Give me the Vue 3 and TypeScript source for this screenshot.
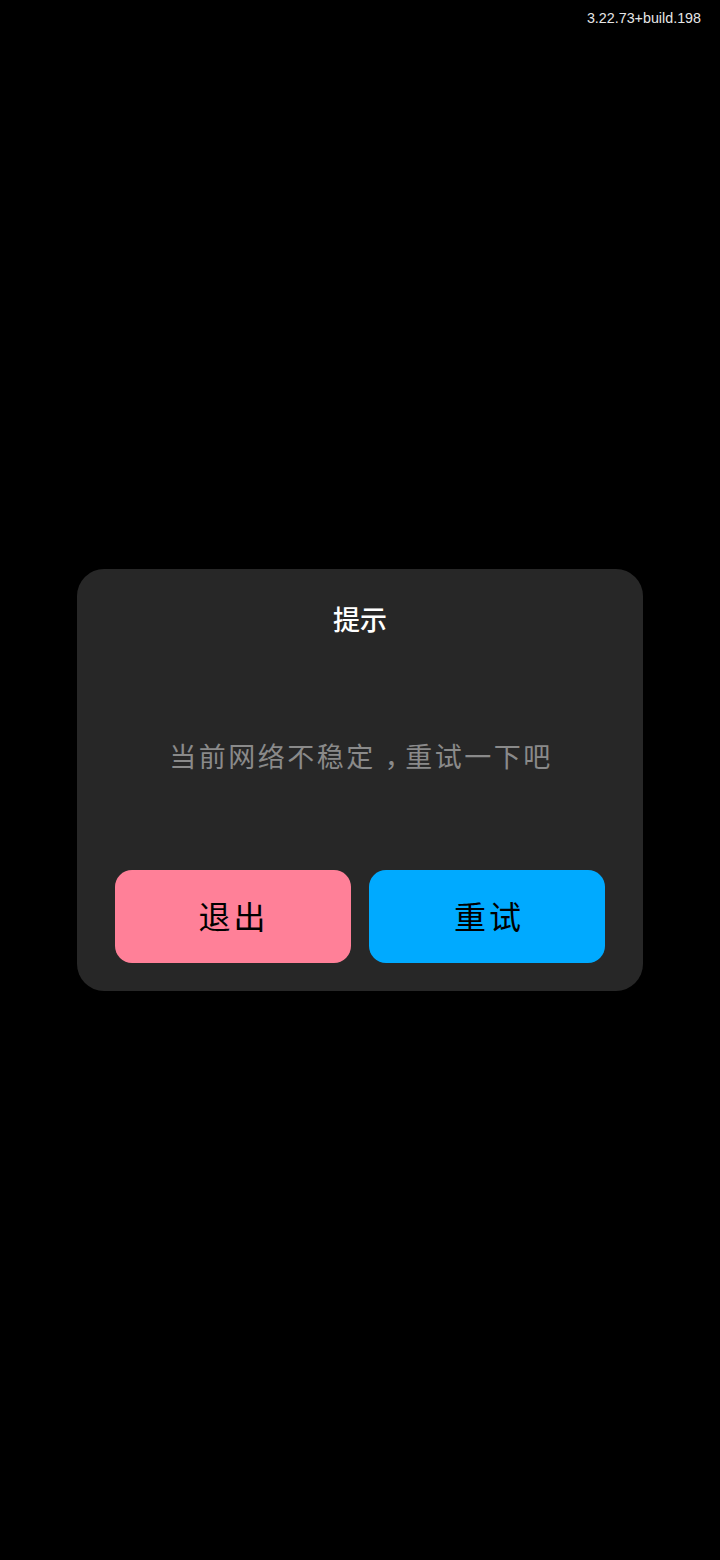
<script setup lang="ts">
const version = '3.22.73+build.198'
</script>

<template>
  <div class="page">
    <div class="version">{{ version }}</div>
    <div class="dialog">
      <div class="title">提示</div>
      <div class="message">当前网络不稳定<span class="comma">，</span>重试一下吧</div>
      <div class="actions">
        <button class="btn exit"><span class="label-exit">退出</span></button>
        <button class="btn retry"><span class="label-retry">重试</span></button>
      </div>
    </div>
  </div>
</template>

<style>
html, body { margin: 0; background: #000; }
</style>

<style scoped>
.page {
  position: relative;
  width: 720px;
  height: 1560px;
  background: #000;
  display: flex;
  flex-direction: column;
  align-items: center;
  padding-top: 569px;
  box-sizing: border-box;
  font-family: "Noto Sans CJK SC", sans-serif;
}
.version {
  position: absolute;
  top: 9px;
  right: 19px;
  font-family: "Liberation Sans", sans-serif;
  font-size: 14.3px;
  line-height: 18px;
  color: #e6e6e6;
}
.dialog {
  width: 566px;
  height: 422px;
  box-sizing: border-box;
  background: #272727;
  border-radius: 27px;
  padding: 30px 38px 28px;
  display: flex;
  flex-direction: column;
  align-items: center;
}
.title {
  font-size: 27px;
  font-weight: 500;
  line-height: 40px;
  color: #fff;
}
.message {
  margin-top: 97px;
  margin-left: 2px;
  font-size: 27px;
  line-height: 40px;
  color: #8a8a8a;
  letter-spacing: 2.5px;
}
.comma {
  font-feature-settings: "halt";
  margin-left: 9px;
  margin-right: 4.5px;
}
.actions {
  margin-top: auto;
  display: grid;
  grid-template-columns: 1fr 1fr;
  gap: 18px;
  width: 100%;
}
.btn {
  height: 93px;
  padding: 0 0 4px;
  border: none;
  border-radius: 17px;
  font-family: inherit;
  font-size: 32px;
  letter-spacing: 3px;
  color: #000;
}
.label-exit { margin-left: 1px; }
.label-retry { margin-left: 4px; }
.exit { background: #ff8098; }
.retry { background: #00aaff; }
</style>
